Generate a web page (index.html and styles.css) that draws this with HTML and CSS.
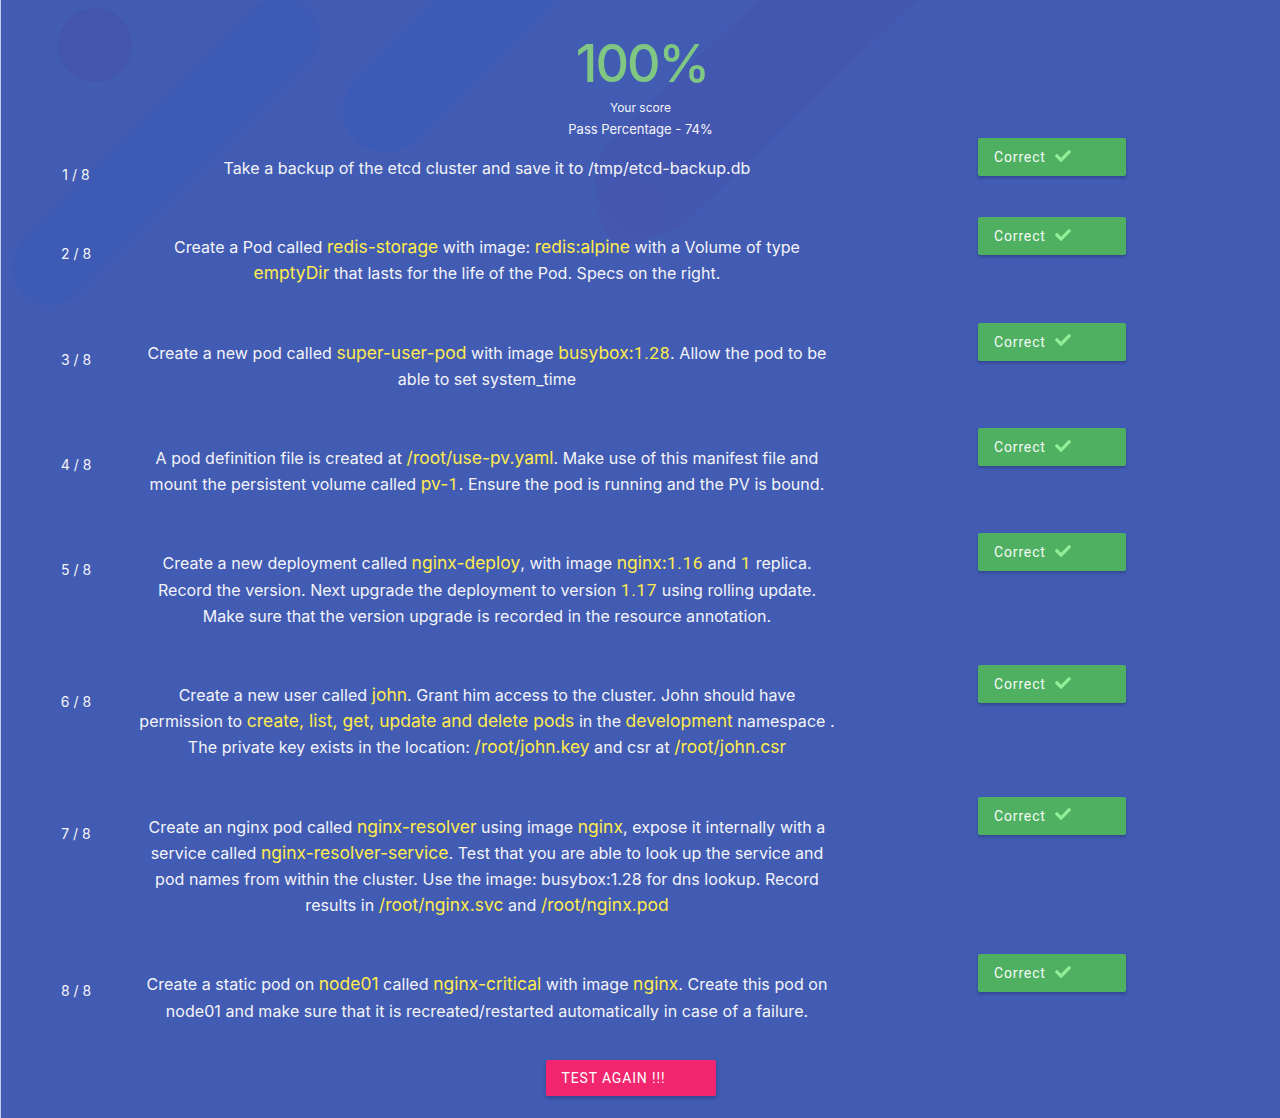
FILE: index.html
```html
<!DOCTYPE html>
<html lang="en">
<head>
<meta charset="utf-8">
<title>Results</title>
<link rel="stylesheet" href="styles.css">
</head>
<body>
<div class="page">
  <svg class="bg" width="1280" height="1118" viewBox="0 0 1280 1118" aria-hidden="true">
    <circle cx="95" cy="45" r="37" fill="#4455ad"/>
    <line x1="50" y1="267" x2="282" y2="35" stroke="#3d5ab5" stroke-width="76" stroke-linecap="round"/>
    <line x1="385" y1="110" x2="560" y2="-60" stroke="#3c5bb7" stroke-width="84" stroke-linecap="round"/>
    <line x1="650" y1="180" x2="900" y2="-60" stroke="#4653ae" stroke-width="110" stroke-linecap="round" opacity="0.55"/>
    <circle cx="630" cy="212" r="32" fill="#4756ae" opacity="0.8"/>
  </svg>

  <header class="score">
    <div class="score-value">100%</div>
    <div class="score-label">Your score</div>
    <div class="score-pass">Pass Percentage - 74%</div>
  </header>

  <main class="list">
    <div class="row">
      <div class="num">1 / 8</div>
      <div class="q">Take a backup of the etcd cluster and save it to /tmp/etcd-backup.db</div>
      <div class="result"><span>Correct</span><svg class="check" viewBox="0 0 512 380"><path d="M173.9 372.4l-166.4-166.4c-10-10-10-26.2 0-36.2l36.2-36.2c10-10 26.2-10 36.2 0L192 245.7 432.1 5.6c10-10 26.2-10 36.2 0l36.2 36.2c10 10 10 26.2 0 36.2l-294.4 294.4c-10 10-26.2 10-36.2 0z"/></svg></div>
    </div>

    <div class="row">
      <div class="num">2 / 8</div>
      <div class="q">Create a Pod called <span class="hl">redis-storage</span> with image: <span class="hl">redis:alpine</span> with a Volume of type<br><span class="hl">emptyDir</span> that lasts for the life of the Pod. Specs on the right.</div>
      <div class="result"><span>Correct</span><svg class="check" viewBox="0 0 512 380"><path d="M173.9 372.4l-166.4-166.4c-10-10-10-26.2 0-36.2l36.2-36.2c10-10 26.2-10 36.2 0L192 245.7 432.1 5.6c10-10 26.2-10 36.2 0l36.2 36.2c10 10 10 26.2 0 36.2l-294.4 294.4c-10 10-26.2 10-36.2 0z"/></svg></div>
    </div>

    <div class="row">
      <div class="num">3 / 8</div>
      <div class="q">Create a new pod called <span class="hl">super-user-pod</span> with image <span class="hl">busybox:<span class="ver">1.28</span></span>. Allow the pod to be<br>able to set system_time</div>
      <div class="result"><span>Correct</span><svg class="check" viewBox="0 0 512 380"><path d="M173.9 372.4l-166.4-166.4c-10-10-10-26.2 0-36.2l36.2-36.2c10-10 26.2-10 36.2 0L192 245.7 432.1 5.6c10-10 26.2-10 36.2 0l36.2 36.2c10 10 10 26.2 0 36.2l-294.4 294.4c-10 10-26.2 10-36.2 0z"/></svg></div>
    </div>

    <div class="row">
      <div class="num">4 / 8</div>
      <div class="q">A pod definition file is created at <span class="hl">/root/use-pv.yaml</span>. Make use of this manifest file and<br>mount the persistent volume called <span class="hl">pv-<span class="ver">1</span></span>. Ensure the pod is running and the PV is bound.</div>
      <div class="result"><span>Correct</span><svg class="check" viewBox="0 0 512 380"><path d="M173.9 372.4l-166.4-166.4c-10-10-10-26.2 0-36.2l36.2-36.2c10-10 26.2-10 36.2 0L192 245.7 432.1 5.6c10-10 26.2-10 36.2 0l36.2 36.2c10 10 10 26.2 0 36.2l-294.4 294.4c-10 10-26.2 10-36.2 0z"/></svg></div>
    </div>

    <div class="row">
      <div class="num">5 / 8</div>
      <div class="q">Create a new deployment called <span class="hl">nginx-deploy</span>, with image <span class="hl">nginx:<span class="ver">1.16</span></span> and <span class="hl ver">1</span> replica.<br>Record the version. Next upgrade the deployment to version <span class="hl ver">1.17</span> using rolling update.<br>Make sure that the version upgrade is recorded in the resource annotation.</div>
      <div class="result"><span>Correct</span><svg class="check" viewBox="0 0 512 380"><path d="M173.9 372.4l-166.4-166.4c-10-10-10-26.2 0-36.2l36.2-36.2c10-10 26.2-10 36.2 0L192 245.7 432.1 5.6c10-10 26.2-10 36.2 0l36.2 36.2c10 10 10 26.2 0 36.2l-294.4 294.4c-10 10-26.2 10-36.2 0z"/></svg></div>
    </div>

    <div class="row">
      <div class="num">6 / 8</div>
      <div class="q">Create a new user called <span class="hl">john</span>. Grant him access to the cluster. John should have<br>permission to <span class="hl">create, list, get, update and delete pods</span> in the <span class="hl">development</span> namespace .<br>The private key exists in the location: <span class="hl">/root/john.key</span> and csr at <span class="hl">/root/john.csr</span></div>
      <div class="result"><span>Correct</span><svg class="check" viewBox="0 0 512 380"><path d="M173.9 372.4l-166.4-166.4c-10-10-10-26.2 0-36.2l36.2-36.2c10-10 26.2-10 36.2 0L192 245.7 432.1 5.6c10-10 26.2-10 36.2 0l36.2 36.2c10 10 10 26.2 0 36.2l-294.4 294.4c-10 10-26.2 10-36.2 0z"/></svg></div>
    </div>

    <div class="row">
      <div class="num">7 / 8</div>
      <div class="q">Create an nginx pod called <span class="hl">nginx-resolver</span> using image <span class="hl">nginx</span>, expose it internally with a<br>service called <span class="hl">nginx-resolver-service</span>. Test that you are able to look up the service and<br>pod names from within the cluster. Use the image: busybox:1.28 for dns lookup. Record<br>results in <span class="hl">/root/nginx.svc</span> and <span class="hl">/root/nginx.pod</span></div>
      <div class="result"><span>Correct</span><svg class="check" viewBox="0 0 512 380"><path d="M173.9 372.4l-166.4-166.4c-10-10-10-26.2 0-36.2l36.2-36.2c10-10 26.2-10 36.2 0L192 245.7 432.1 5.6c10-10 26.2-10 36.2 0l36.2 36.2c10 10 10 26.2 0 36.2l-294.4 294.4c-10 10-26.2 10-36.2 0z"/></svg></div>
    </div>

    <div class="row">
      <div class="num">8 / 8</div>
      <div class="q">Create a static pod on <span class="hl">node01</span> called <span class="hl">nginx-critical</span> with image <span class="hl">nginx</span>. Create this pod on<br>node01 and make sure that it is recreated/restarted automatically in case of a failure.</div>
      <div class="result"><span>Correct</span><svg class="check" viewBox="0 0 512 380"><path d="M173.9 372.4l-166.4-166.4c-10-10-10-26.2 0-36.2l36.2-36.2c10-10 26.2-10 36.2 0L192 245.7 432.1 5.6c10-10 26.2-10 36.2 0l36.2 36.2c10 10 10 26.2 0 36.2l-294.4 294.4c-10 10-26.2 10-36.2 0z"/></svg></div>
    </div>
  </main>

  <div class="actions">
    <button class="again" type="button">Test again !!!</button>
  </div>
</div>
</body>
</html>
```

FILE: styles.css
```css
html, body {
  margin: 0;
  padding: 0;
}

body {
  background: #425cb4;
  font-family: Inter, "Noto Sans", "Liberation Sans", sans-serif;
  color: #f4f4f8;
}

.page {
  position: relative;
  width: 1280px;
  height: 1118px;
  overflow: hidden;
  box-sizing: border-box;
  border-left: 1px solid #c9cde3;
}

.bg {
  position: absolute;
  top: 0;
  left: -1px;
  z-index: 0;
}

.score,
.list,
.actions {
  position: relative;
  z-index: 1;
}

.score {
  display: flex;
  flex-direction: column;
  align-items: center;
  padding-top: 38px;
  height: 100px;
}

.score-value {
  font-size: 52px;
  line-height: 52px;
  font-weight: 500;
  color: #81c784;
  letter-spacing: -2px;
  padding-left: 3px;
}

.score-label {
  margin-top: 8px;
  font-size: 12px;
  line-height: 20px;
}

.score-pass {
  font-size: 13px;
  line-height: 22px;
}

.list {
  display: flex;
  flex-direction: column;
}

.row {
  display: flex;
  align-items: flex-start;
  padding-left: 39px;
}

.num {
  width: 72px;
  margin-top: 28px;
  text-align: center;
  font-size: 14px;
  line-height: 18px;
}

.q {
  width: 742px;
  margin-left: 4px;
  margin-top: 17px;
  margin-bottom: 36px;
  text-align: center;
  font-size: 16px;
  line-height: 26.2px;
  letter-spacing: 0.05px;
}

.hl {
  color: #ffeb4d;
  font-size: 17.4px;
  line-height: 1;
}

.ver {
  font-family: Roboto, "Liberation Sans", sans-serif;
  letter-spacing: 0.6px;
  line-height: 1;
}

.result {
  margin-left: 120px;
  width: 148px;
  height: 38px;
  box-sizing: border-box;
  padding-left: 16px;
  display: flex;
  align-items: center;
  gap: 9px;
  background: #4fb062;
  border-radius: 2px;
  box-shadow: 0 2px 3px rgba(20, 30, 80, 0.35);
  font-family: Roboto, "Liberation Sans", sans-serif;
  font-size: 14px;
  letter-spacing: 0.85px;
  color: #f4fbf4;
}

.check {
  width: 16px;
  height: 12px;
  margin-top: -3px;
  fill: #93ee98;
}

.actions {
  display: flex;
  justify-content: center;
  padding-right: 20px;
}

.again {
  width: 170px;
  height: 36px;
  padding: 0 16px;
  text-align: left;
  border: none;
  border-radius: 2px;
  background: #f1266e;
  color: #fff;
  font-family: Roboto, "Liberation Sans", sans-serif;
  font-size: 14px;
  letter-spacing: 0.85px;
  text-transform: uppercase;
  box-shadow: 0 2px 4px rgba(20, 30, 80, 0.4);
}
```
